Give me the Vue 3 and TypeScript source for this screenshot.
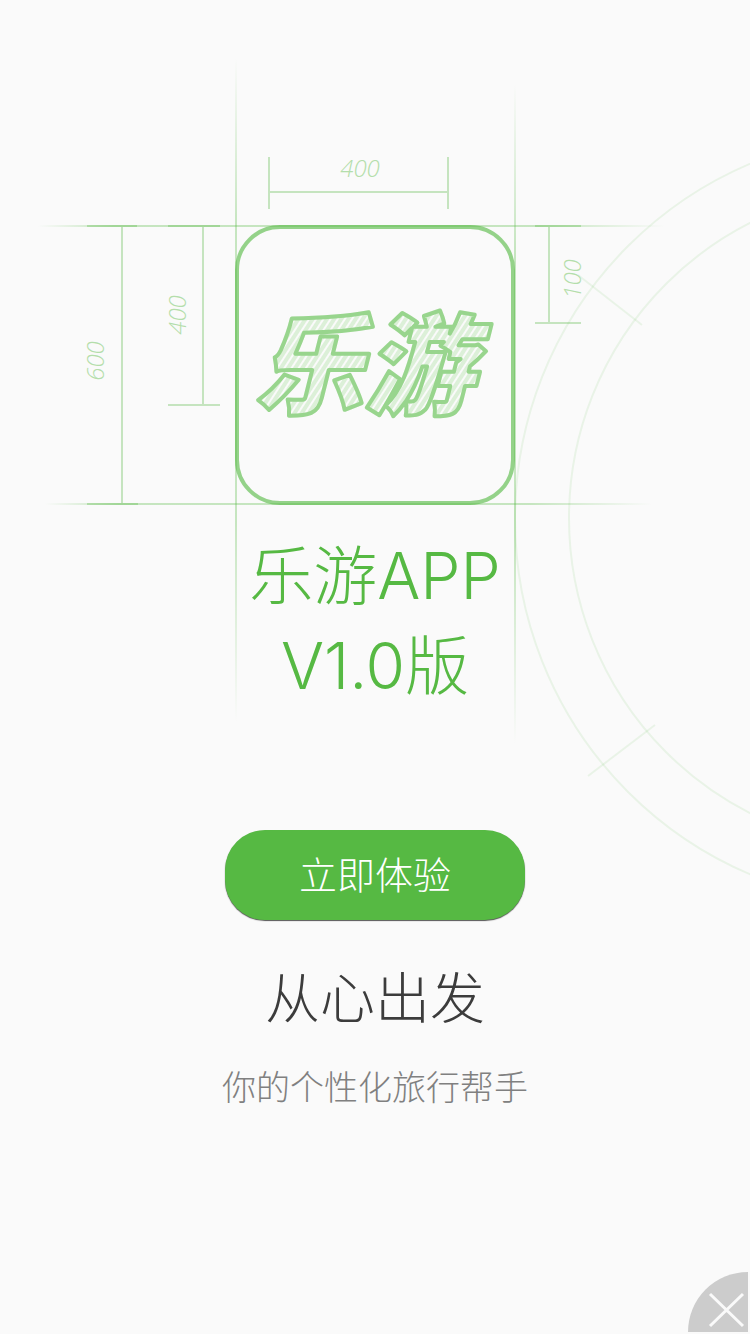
<script setup lang="ts">
import { ref } from 'vue'

interface Line {
  x1: number
  y1: number
  x2: number
  y2: number
}

const open = ref<boolean>(true)

const dimensionLines: Line[] = [
  { x1: 269, y1: 157, x2: 269, y2: 209 },
  { x1: 448, y1: 157, x2: 448, y2: 209 },
  { x1: 270, y1: 192, x2: 447, y2: 192 },
  { x1: 87, y1: 226, x2: 137, y2: 226 },
  { x1: 122, y1: 227, x2: 122, y2: 503 },
  { x1: 87, y1: 504, x2: 138, y2: 504 },
  { x1: 168, y1: 226, x2: 220, y2: 226 },
  { x1: 203, y1: 227, x2: 203, y2: 404 },
  { x1: 168, y1: 405, x2: 220, y2: 405 },
  { x1: 535, y1: 226, x2: 581, y2: 226 },
  { x1: 549, y1: 227, x2: 549, y2: 322 },
  { x1: 535, y1: 323, x2: 581, y2: 323 },
]
</script>

<template>
  <main v-if="open" class="splash">
    <svg class="blueprint" viewBox="0 0 750 900" preserveAspectRatio="xMidYMin meet" role="img" aria-label="乐游">
      <defs>
        <linearGradient id="fadeX" x1="0" x2="1" y1="0" y2="0">
          <stop offset="0" stop-color="#56b943" stop-opacity="0" />
          <stop offset="0.12" stop-color="#56b943" stop-opacity="0.32" />
          <stop offset="0.8" stop-color="#56b943" stop-opacity="0.32" />
          <stop offset="1" stop-color="#56b943" stop-opacity="0" />
        </linearGradient>
        <linearGradient id="fadeY" x1="0" x2="0" y1="0" y2="1">
          <stop offset="0" stop-color="#56b943" stop-opacity="0" />
          <stop offset="0.25" stop-color="#56b943" stop-opacity="0.32" />
          <stop offset="0.7" stop-color="#56b943" stop-opacity="0.32" />
          <stop offset="1" stop-color="#56b943" stop-opacity="0" />
        </linearGradient>
        <pattern id="hatch" width="6" height="6" patternUnits="userSpaceOnUse" patternTransform="rotate(33)">
          <rect width="6" height="6" fill="#dcf0d8" />
          <rect width="2" height="6" fill="#fafafa" />
        </pattern>
      </defs>

      <g class="orbit">
        <circle cx="901" cy="519" r="386" />
        <circle cx="900" cy="518" r="331" />
        <path d="M578 275L642 325M588 776L655 725" />
      </g>

      <rect class="tile" x="237" y="227" width="276" height="276" rx="43" />

      <rect x="38" y="225" width="627" height="2" fill="url(#fadeX)" />
      <rect x="45" y="503" width="607" height="2" fill="url(#fadeX)" />
      <rect x="235" y="58" width="2" height="664" fill="url(#fadeY)" />
      <rect x="514" y="84" width="2" height="660" fill="url(#fadeY)" />

      <g class="dimension">
        <line v-for="(l, i) in dimensionLines" :key="i" :x1="l.x1" :y1="l.y1" :x2="l.x2" :y2="l.y2" />
      </g>

      <g class="measure">
        <text x="360" y="177">400</text>
        <text transform="translate(186 315) rotate(-90)">400</text>
        <text transform="translate(104 361) rotate(-90)">600</text>
        <text transform="translate(581 279) rotate(-90)">100</text>
      </g>

      <text class="wordmark" x="364" y="406">乐游</text>
    </svg>

    <h1 class="title">乐游APP<br />V1.0版</h1>
    <button class="start" type="button">立即体验</button>
    <h2 class="slogan">从心出发</h2>
    <p class="tagline">你的个性化旅行帮手</p>

    <button class="close" type="button" aria-label="关闭" @click="open = false">
      <svg viewBox="0 0 60 60" aria-hidden="true">
        <path d="M22 22L55 54M55 22L22 54" />
      </svg>
    </button>
  </main>
</template>

<style>
body {
  background: #fafafa;
}
</style>

<style scoped>
.splash {
  position: relative;
  box-sizing: border-box;
  min-height: 100vh;
  padding: 531px 24px 80px;
  display: flex;
  flex-direction: column;
  align-items: center;
  overflow: hidden;
  background: #fafafa;
  font-family: Inter, "Noto Sans CJK SC", sans-serif;
  font-weight: 300;
  text-align: center;
}

.blueprint {
  position: absolute;
  top: 0;
  left: 0;
  width: 100%;
  height: 900px;
  overflow: visible;
  pointer-events: none;
}

.orbit {
  fill: none;
  stroke: #56b943;
  stroke-opacity: 0.1;
  stroke-width: 2;
}

.tile {
  fill: none;
  stroke: #56b943;
  stroke-opacity: 0.62;
  stroke-width: 4;
}

.dimension {
  stroke: #56b943;
  stroke-opacity: 0.32;
  stroke-width: 2;
}

.measure {
  fill: #b4deab;
  font-family: "Open Sans", sans-serif;
  font-size: 24px;
  font-style: italic;
  font-weight: 300;
  text-anchor: middle;
}

.wordmark {
  fill: url(#hatch);
  stroke: #98d58d;
  stroke-width: 4;
  stroke-linejoin: round;
  font-family: "Noto Sans CJK SC", sans-serif;
  font-size: 110px;
  font-style: italic;
  font-weight: 900;
  text-anchor: middle;
}

.title {
  position: relative;
  margin: 0;
  color: #56b943;
  font-size: 64px;
  font-weight: 300;
  line-height: 90px;
}

.start {
  position: relative;
  width: 300px;
  height: 90px;
  margin: 119px 0 0;
  padding: 0 0 6px;
  border: 0;
  border-radius: 40px;
  background: #56b943;
  box-shadow: 0 1px 1px #555;
  color: #fff;
  font: inherit;
  font-size: 38px;
  cursor: pointer;
}

.slogan {
  margin: 38px 0 0;
  color: #3c3c3c;
  font-size: 55px;
  font-weight: 300;
  line-height: 80px;
}

.tagline {
  margin: 26px 0 0;
  color: #808080;
  font-size: 34px;
  line-height: 48px;
}

.close {
  position: absolute;
  right: 2px;
  bottom: 2px;
  width: 60px;
  height: 60px;
  padding: 0;
  border: 0;
  border-radius: 60px 0 0 0;
  background: #ccc;
  cursor: pointer;
}

.close svg {
  display: block;
  width: 60px;
  height: 60px;
  fill: none;
  stroke: #fafafa;
  stroke-width: 3;
}
</style>
